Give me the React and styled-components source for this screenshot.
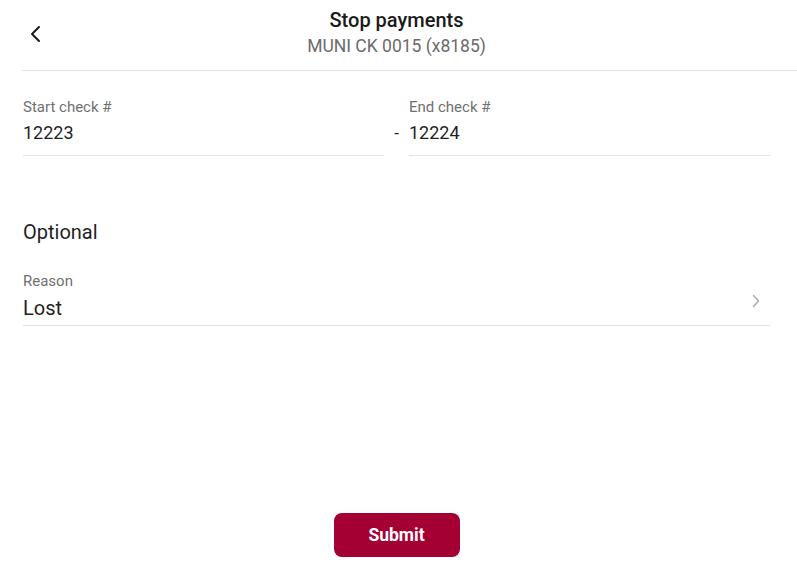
import React from 'react';
import styled, { createGlobalStyle } from 'styled-components';

const GlobalStyle = createGlobalStyle`
  html, body {
    margin: 0;
    padding: 0;
    background: #ffffff;
    font-family: Roboto, "Liberation Sans", sans-serif;
    color: #1f1f1f;
  }
`;

const Page = styled.div`
  display: flex;
  flex-direction: column;
  min-height: 100vh;
  box-sizing: border-box;
`;

const Header = styled.header`
  position: relative;
  display: flex;
  flex-direction: column;
  align-items: center;
  margin-left: 22px;
  padding: 8px 0 14px;
  border-bottom: 1px solid #e3e3e3;
`;

const BackButton = styled.button`
  position: absolute;
  left: 2px;
  top: 22px;
  width: 24px;
  height: 24px;
  padding: 0;
  border: none;
  background: none;
  cursor: pointer;
  display: flex;
  align-items: center;
  justify-content: center;
`;

const Title = styled.h1`
  margin: 0 0 0 -26px;
  font-size: 20px;
  font-weight: 500;
  line-height: 24px;
  color: #1a1a1a;
`;

const Subtitle = styled.div`
  margin: 4px 0 0 -26px;
  font-size: 17.5px;
  line-height: 20px;
  color: #6b6b6b;
`;

const Content = styled.main`
  flex: 1;
  padding: 27px 27px 0 23px;
`;

const RangeRow = styled.div`
  display: grid;
  grid-template-columns: 1fr 25px 1fr;
  align-items: end;
`;

const Field = styled.div`
  display: flex;
  flex-direction: column;
  border-bottom: 1px solid #e3e3e3;
  padding-bottom: 11px;
`;

const Label = styled.span`
  font-size: 15px;
  line-height: 18px;
  color: #707070;
`;

const Value = styled.span`
  margin-top: 6px;
  font-size: ${p => p.$size || 18}px;
  line-height: ${p => p.$line || 22}px;
  color: #1f1f1f;
`;

const Dash = styled.span`
  align-self: end;
  padding-bottom: 12px;
  text-align: center;
  font-size: 17px;
  line-height: 22px;
  color: #1f1f1f;
`;

const SectionTitle = styled.h2`
  margin: 63px 0 0;
  font-size: 20px;
  font-weight: 400;
  line-height: 26px;
  color: #1f1f1f;
`;

const SelectField = styled.div`
  margin-top: 27px;
  display: flex;
  align-items: flex-end;
  justify-content: space-between;
  border-bottom: 1px solid #e3e3e3;
  padding-bottom: 5px;
  cursor: pointer;
`;

const SelectText = styled.div`
  display: flex;
  flex-direction: column;
`;

const ChevronSlot = styled.span`
  display: flex;
  margin: 0 10px 12px 0;
`;

const Footer = styled.div`
  display: flex;
  justify-content: center;
  padding: 0 4px 21px 0;
`;

const SubmitButton = styled.button`
  width: 126px;
  height: 44px;
  border: none;
  border-radius: 8px;
  background: #a50034;
  color: #ffffff;
  font-family: Roboto, "Liberation Sans", sans-serif;
  font-size: 17.5px;
  font-weight: 700;
  cursor: pointer;
`;

const ChevronLeft = () => (
  <svg width="20" height="20" viewBox="0 0 20 20" fill="none">
    <path d="M13 3 L6 10 L13 17" stroke="#1a1a1a" strokeWidth="2" strokeLinecap="round" strokeLinejoin="round" />
  </svg>
);

const ChevronRight = () => (
  <svg width="8" height="14" viewBox="0 0 8 14" fill="none">
    <path d="M1.5 1.5 L6.5 7 L1.5 12.5" stroke="#a6a6a6" strokeWidth="1.3" strokeLinecap="round" strokeLinejoin="round" />
  </svg>
);

const App = () => (
  <>
    <GlobalStyle />
    <Page>
      <Header>
        <BackButton aria-label="Back">
          <ChevronLeft />
        </BackButton>
        <Title>Stop payments</Title>
        <Subtitle>MUNI CK 0015 (x8185)</Subtitle>
      </Header>

      <Content>
        <RangeRow>
          <Field>
            <Label>Start check #</Label>
            <Value>12223</Value>
          </Field>
          <Dash>-</Dash>
          <Field>
            <Label>End check #</Label>
            <Value>12224</Value>
          </Field>
        </RangeRow>

        <SectionTitle>Optional</SectionTitle>

        <SelectField>
          <SelectText>
            <Label>Reason</Label>
            <Value $size={20} $line={24}>Lost</Value>
          </SelectText>
          <ChevronSlot>
            <ChevronRight />
          </ChevronSlot>
        </SelectField>
      </Content>

      <Footer>
        <SubmitButton>Submit</SubmitButton>
      </Footer>
    </Page>
  </>
);

export default App;
